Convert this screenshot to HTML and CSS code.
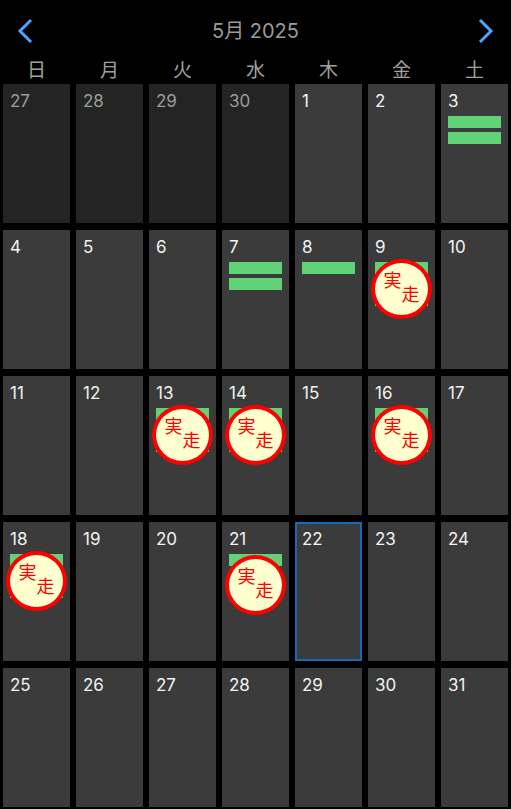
FILE: index.html
```html
<!DOCTYPE html>
<html lang="ja">
<head>
    <meta charset="UTF-8">
    <meta name="viewport" content="width=device-width, initial-scale=1.0">
    <title>5月 2025</title>
    <link rel="stylesheet" href="styles.css">
</head>
<body>

    <main class="calendar">
        <header class="header">
            <button class="nav" aria-label="前の月">
                <svg width="16" height="26" viewBox="0 0 16 26"><path d="M14 2 L3 13 L14 24"/></svg>
            </button>
            <h1 class="title">5月 2025</h1>
            <button class="nav" aria-label="次の月">
                <svg width="16" height="26" viewBox="0 0 16 26"><path d="M2 2 L13 13 L2 24"/></svg>
            </button>
        </header>

        <table class="month">
            <thead>
                <tr>
                    <th>日</th>
                    <th>月</th>
                    <th>火</th>
                    <th>水</th>
                    <th>木</th>
                    <th>金</th>
                    <th>土</th>
                </tr>
            </thead>
            <tbody>
                <tr>
                    <td class="other">27</td>
                    <td class="other">28</td>
                    <td class="other">29</td>
                    <td class="other">30</td>
                    <td>1</td>
                    <td>2</td>
                    <td>3<div class="bar"></div><div class="bar"></div></td>
                </tr>
                <tr>
                    <td>4</td>
                    <td>5</td>
                    <td>6</td>
                    <td>7<div class="bar"></div><div class="bar"></div></td>
                    <td>8<div class="bar"></div></td>
                    <td>9<div class="bar"></div><div class="bar"></div><div class="bar"></div>
                        <div class="stamp"><span>実</span><span>走</span></div></td>
                    <td>10</td>
                </tr>
                <tr>
                    <td>11</td>
                    <td>12</td>
                    <td>13<div class="bar"></div><div class="bar"></div><div class="bar"></div>
                        <div class="stamp"><span>実</span><span>走</span></div></td>
                    <td>14<div class="bar"></div><div class="bar"></div><div class="bar"></div>
                        <div class="stamp"><span>実</span><span>走</span></div></td>
                    <td>15</td>
                    <td>16<div class="bar"></div><div class="bar"></div><div class="bar"></div>
                        <div class="stamp"><span>実</span><span>走</span></div></td>
                    <td>17</td>
                </tr>
                <tr>
                    <td>18<div class="bar"></div><div class="bar"></div><div class="bar"></div>
                        <div class="stamp"><span>実</span><span>走</span></div></td>
                    <td>19</td>
                    <td>20</td>
                    <td>21<div class="bar"></div>
                        <div class="stamp low"><span>実</span><span>走</span></div></td>
                    <td class="today">22</td>
                    <td>23</td>
                    <td>24</td>
                </tr>
                <tr>
                    <td>25</td>
                    <td>26</td>
                    <td>27</td>
                    <td>28</td>
                    <td>29</td>
                    <td>30</td>
                    <td>31</td>
                </tr>
            </tbody>
        </table>
    </main>

</body>
</html>
```
FILE: styles.css
```css
* {
    box-sizing: border-box;
}

body {
    margin: 0;
    background-color: #000;
    color: #f2f2f2;
    font-family: Inter, "Noto Sans CJK JP", sans-serif;
}

.calendar {
    overflow: hidden;
}

.header {
    display: flex;
    justify-content: space-between;
    align-items: center;
    height: 50px;
    padding: 12px 17px 0;
}

.title {
    margin: 0;
    padding-bottom: 4px;
    font-size: 20px;
    font-weight: 400;
    color: #9b9b9b;
}

.nav {
    display: flex;
    padding: 0;
    border: none;
    background: none;
    cursor: pointer;
}

.nav path {
    fill: none;
    stroke: #4da3ff;
    stroke-width: 3;
}

/* The outer border-spacing is pulled past the edges */
.month {
    width: calc(100% + 6px);
    margin: 0 -3px -5px;
    table-layout: fixed;
    border-collapse: separate;
    border-spacing: 6px 7px;
}

.month th {
    height: 20px;
    padding: 8px 0 0;
    font-size: 19px;
    font-weight: 400;
    line-height: 12px;
    color: #a0a0a0;
}

.month td {
    position: relative;
    height: 139px;
    padding: 7px;
    vertical-align: top;
    background-color: #3a3b3a;
    font-size: 17px;
    line-height: 21px;
}

.month .other {
    background-color: #242424;
    color: #9b9b9b;
}

.month .today {
    box-shadow: inset 0 0 0 2px #1a68b8;
}

.bar {
    height: 12px;
    margin-top: 4px;
    background-color: #61d376;
}

/* Round seal over the bars */
.stamp {
    position: absolute;
    top: 29px;
    left: 3px;
    display: flex;
    justify-content: center;
    width: 61px;
    height: 60px;
    padding-top: 6px;
    border: 4px solid #f00;
    border-radius: 50%;
    background-color: #ffffd0;
    color: #f00;
    font-size: 18px;
    line-height: 24px;
}

.stamp span + span {
    margin-top: 14px;
}

.low {
    top: 33px;
}
```
